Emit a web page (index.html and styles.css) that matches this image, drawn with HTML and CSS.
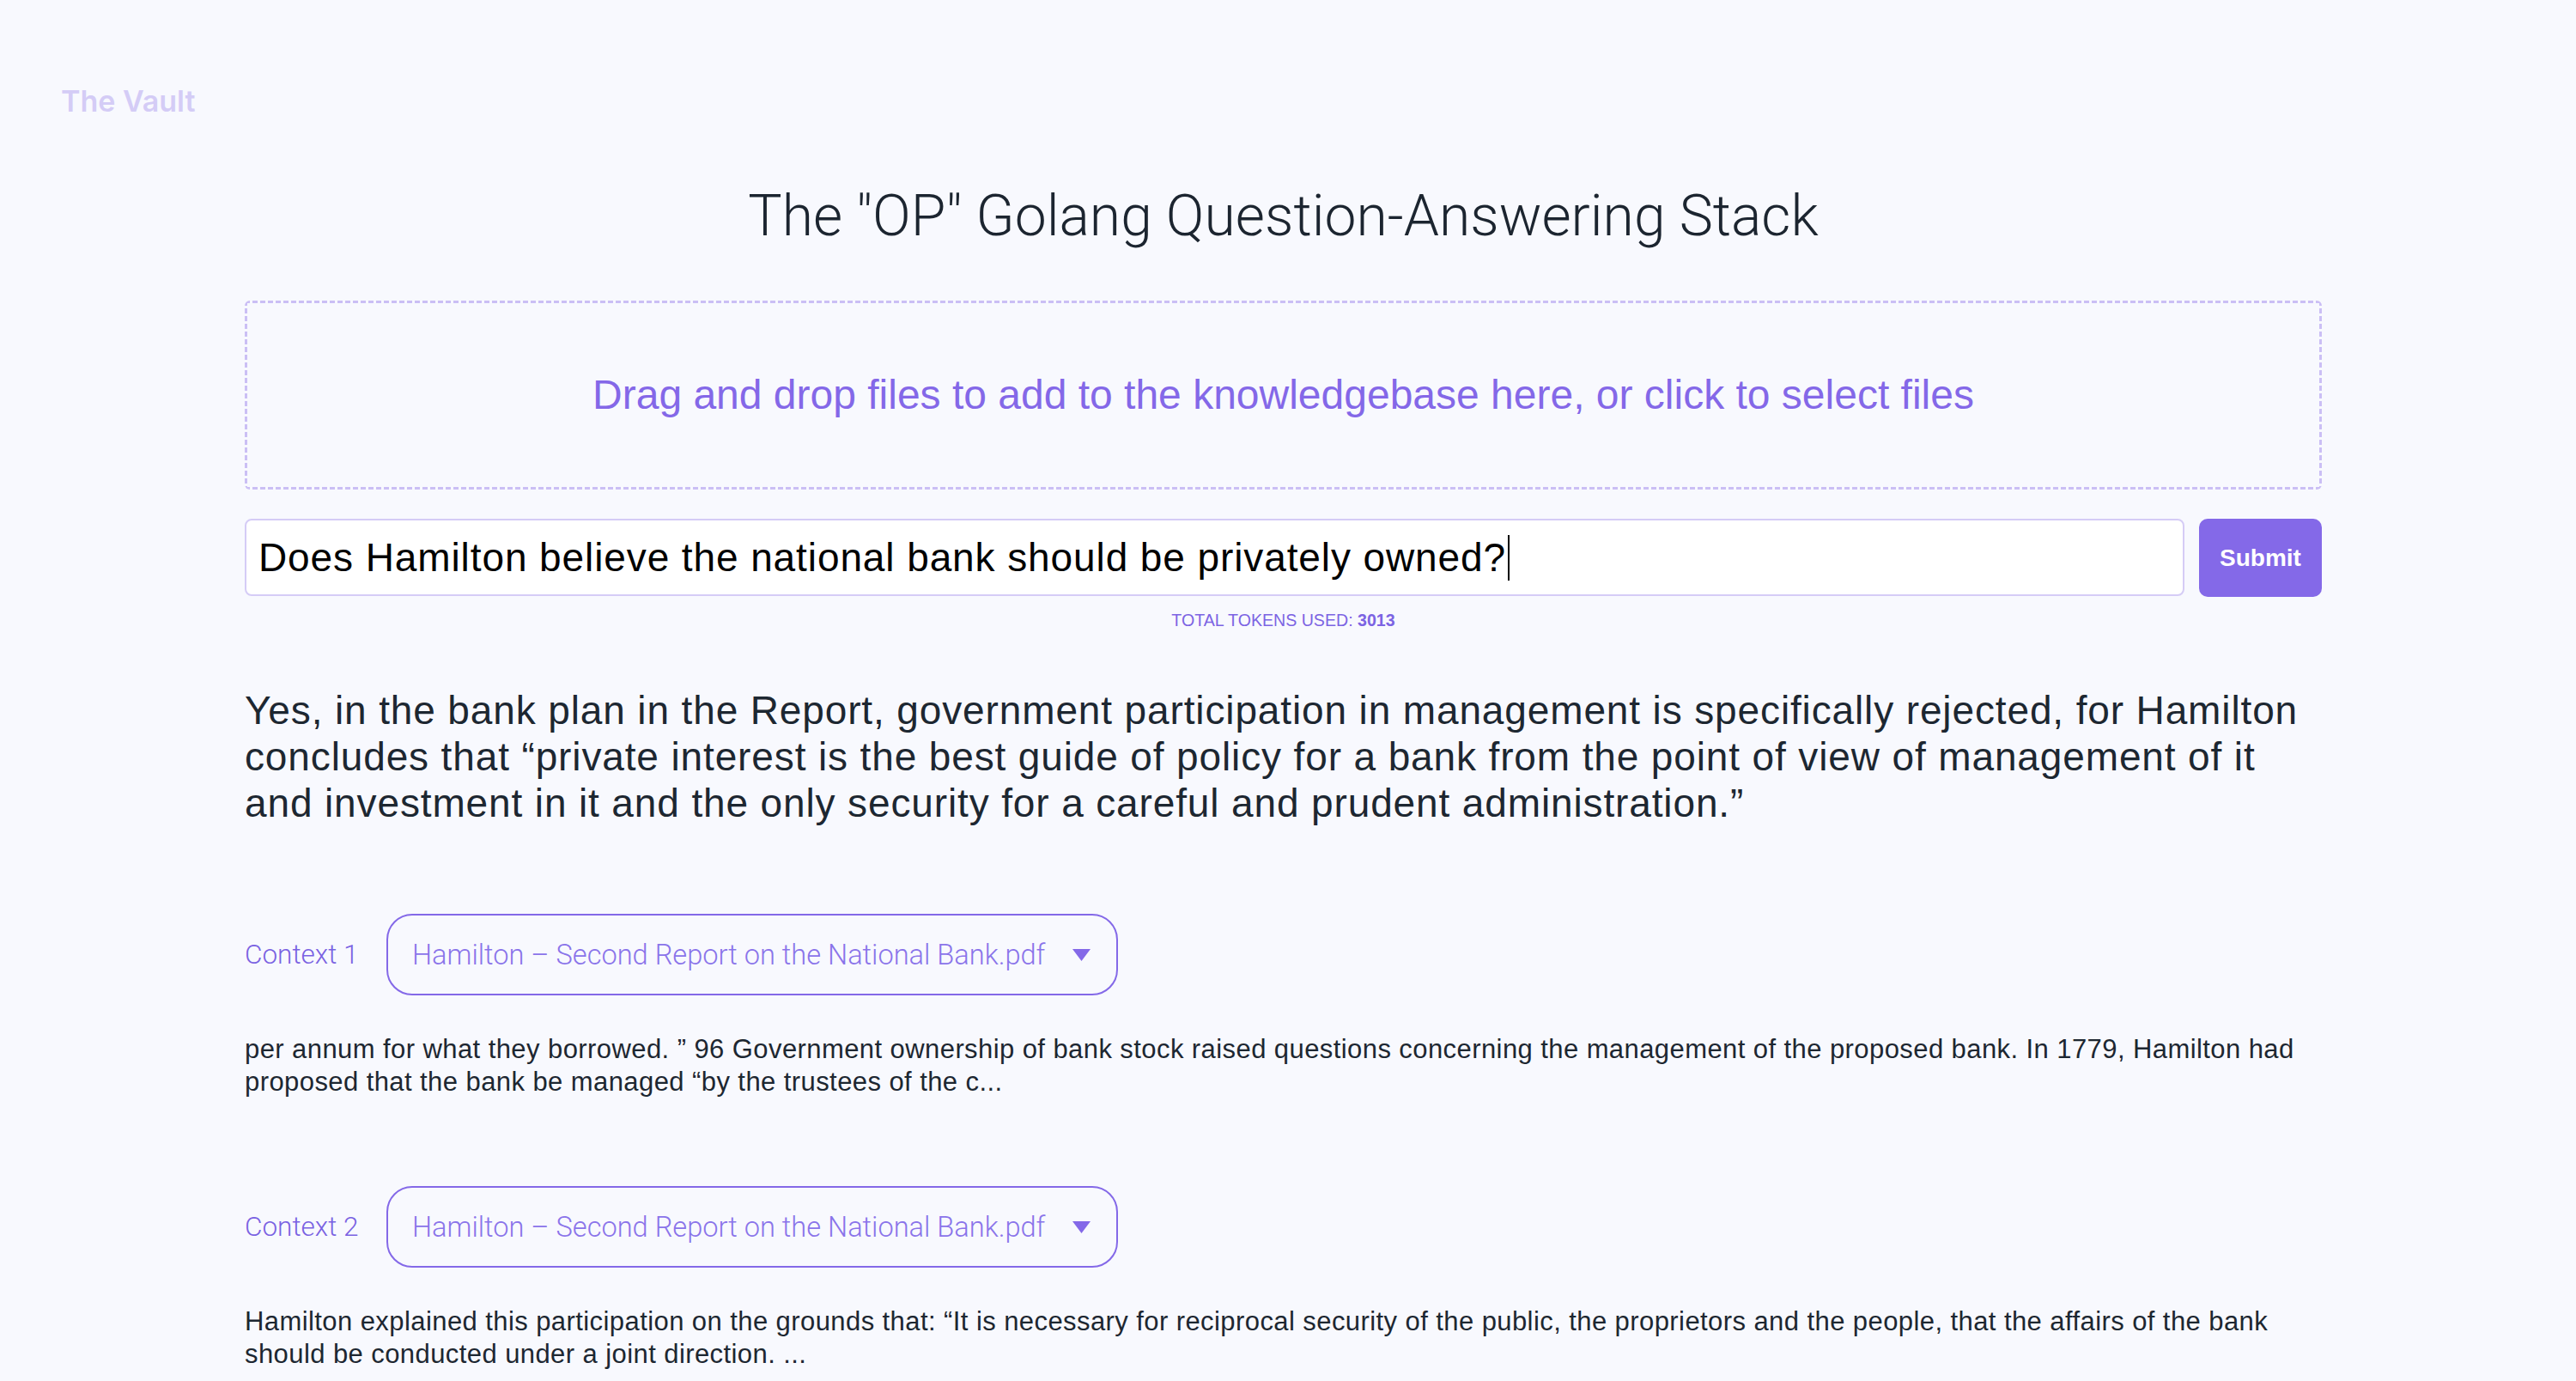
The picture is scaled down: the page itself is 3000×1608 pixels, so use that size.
FILE: index.html
```html
<!DOCTYPE html>
<html lang="en">
<head>
<meta charset="utf-8">
<title>The Vault</title>
<link rel="stylesheet" href="styles.css">
</head>
<body>
<header class="site-header"><span class="brand">The Vault</span></header>
<main class="main">
  <h1 class="title">The "OP" Golang Question-Answering Stack</h1>
  <div class="dropzone">
    <p class="dropzone-text">Drag and drop files to add to the knowledgebase here, or click to select files</p>
  </div>
  <form class="query-row">
    <div class="query-input"><span class="query-text">Does Hamilton believe the national bank should be privately owned?</span><span class="caret"></span></div>
    <button class="submit" type="button">Submit</button>
  </form>
  <p class="tokens">TOTAL TOKENS USED: <strong>3013</strong></p>
  <p class="answer">Yes, in the bank plan in the Report, government participation in management is specifically rejected, for Hamilton concludes that “private interest is the best guide of policy for a bank from the point of view of management of it and investment in it and the only security for a careful and prudent administration.”</p>

  <section class="context">
    <div class="context-head">
      <span class="context-label">Context 1</span>
      <div class="context-select">
        <span class="context-file">Hamilton – Second Report on the National Bank.pdf</span>
        <svg class="chevron" width="21" height="14" viewBox="0 0 21 14"><polygon points="0,0 21,0 10.5,14"/></svg>
      </div>
    </div>
    <p class="context-text">per annum for what they borrowed. ” 96 Government ownership of bank stock raised questions concerning the management of the proposed bank. In 1779, Hamilton had proposed that the bank be managed “by the trustees of the c...</p>
  </section>

  <section class="context">
    <div class="context-head">
      <span class="context-label">Context 2</span>
      <div class="context-select">
        <span class="context-file">Hamilton – Second Report on the National Bank.pdf</span>
        <svg class="chevron" width="21" height="14" viewBox="0 0 21 14"><polygon points="0,0 21,0 10.5,14"/></svg>
      </div>
    </div>
    <p class="context-text">Hamilton explained this participation on the grounds that: “It is necessary for reciprocal security of the public, the proprietors and the people, that the affairs of the bank should be conducted under a joint direction. ...</p>
  </section>
</main>
</body>
</html>
```

FILE: styles.css
```css
* {
  box-sizing: border-box;
}

html, body {
  margin: 0;
  padding: 0;
  background: #f8f9fe;
}

body {
  font-family: "Liberation Sans", Arial, sans-serif;
  color: #1e2a33;
  height: 1608px;
  overflow: hidden;
}

.site-header {
  padding: 100px 71px 0;
}

.brand {
  display: block;
  font-family: Inter, "Liberation Sans", sans-serif;
  font-weight: 600;
  font-size: 34px;
  line-height: 35px;
  color: #d4ccf6;
}

.main {
  margin-left: 285px;
  width: 2419px;
}

.title {
  margin: 79px 0 0;
  font-family: Roboto, "Liberation Sans", sans-serif;
  font-weight: 300;
  font-size: 66px;
  line-height: 76px;
  text-align: center;
  color: #1c2530;
}

.dropzone {
  margin-top: 60px;
  height: 220px;
  border-radius: 6px;
  background-image:
    repeating-linear-gradient(90deg, #cbbff5 0 6px, transparent 6px 9px),
    repeating-linear-gradient(90deg, #cbbff5 0 6px, transparent 6px 9px),
    repeating-linear-gradient(180deg, #cbbff5 0 6px, transparent 6px 9px),
    repeating-linear-gradient(180deg, #cbbff5 0 6px, transparent 6px 9px);
  background-size: 100% 3px, 100% 3px, 3px 100%, 3px 100%;
  background-position: left top, left bottom, left top, right top;
  background-repeat: no-repeat;
  display: flex;
  align-items: center;
  justify-content: center;
}

.dropzone-text {
  margin: 0;
  font-size: 48px;
  line-height: 56px;
  color: #8468e8;
}

.query-row {
  margin: 34px 0 0;
  display: flex;
  align-items: flex-start;
  gap: 17px;
}

.query-input {
  flex: 1;
  height: 90px;
  background: #ffffff;
  border: 2px solid #d5ccf6;
  border-radius: 8px;
  padding: 0 14px;
  display: flex;
  align-items: center;
  font-size: 46px;
  letter-spacing: 0.9px;
  color: #000000;
  white-space: nowrap;
}

.caret {
  display: inline-block;
  width: 2px;
  height: 53px;
  margin-left: 2px;
  background: #000000;
}

.submit {
  width: 143px;
  height: 91px;
  border: none;
  border-radius: 10px;
  background: #8469e8;
  color: #ffffff;
  font-family: "Liberation Sans", Arial, sans-serif;
  font-weight: 700;
  font-size: 28px;
  padding: 0;
}

.tokens {
  margin: 15px 0 0;
  text-align: center;
  font-size: 19.6px;
  line-height: 24px;
  color: #7c64e3;
}

.tokens strong {
  font-weight: 700;
}

.answer {
  margin: 66px 0 0;
  font-size: 46px;
  line-height: 54px;
  letter-spacing: 0.87px;
  color: #1d2731;
}

.context {
  margin-top: 102px;
}

.context-head {
  display: flex;
  align-items: center;
}

.context-label {
  width: 133px;
  margin-right: 32px;
  white-space: nowrap;
  font-family: Roboto, "Liberation Sans", sans-serif;
  font-weight: 300;
  font-size: 31.5px;
  color: #7a62e2;
}

.context-select {
  width: 852px;
  height: 95px;
  border: 2px solid #8469e8;
  border-radius: 30px;
  padding: 0 30px 0 28px;
  display: flex;
  align-items: center;
  justify-content: space-between;
}

.context-file {
  font-family: Roboto, "Liberation Sans", sans-serif;
  font-weight: 300;
  font-size: 32.6px;
  color: #8a74ea;
  white-space: nowrap;
}

.chevron {
  display: block;
  fill: #8469e8;
}

.context-text {
  margin: 44px 0 0;
  font-size: 31px;
  line-height: 38px;
  letter-spacing: 0.42px;
  color: #1d2731;
}
```
